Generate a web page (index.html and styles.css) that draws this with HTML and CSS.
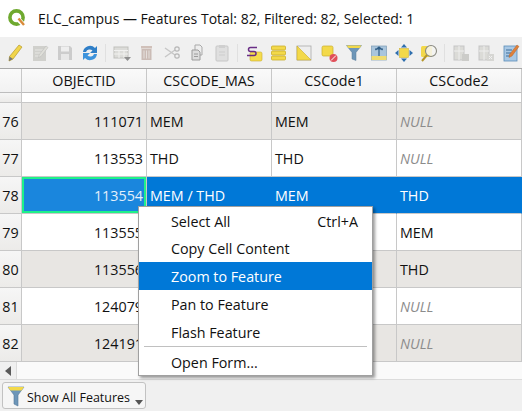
FILE: index.html
```html
<!DOCTYPE html>
<html lang="en">
<head>
  <meta charset="UTF-8" />
  <title>ELC_campus</title>
  <link rel="stylesheet" href="styles.css">
</head>
<body>
  <div class="titlebar">
    <svg class="logo" width="20" height="20" viewBox="0 0 20 20">
      <circle cx="9.5" cy="9.5" r="6.6" fill="none" stroke="#6fa92f" stroke-width="3.6"/>
      <path d="M9 9.5h4l5 5.5v3h-3.500l-5.500-5.500z" fill="#fff"/>
      <path d="M11.500 10.500l5.500 6.500" stroke="#d98a3a" stroke-width="2.400" fill="none"/>
    </svg>
    <span>ELC_campus — Features Total: 82, Filtered: 82, Selected: 1</span>
  </div>

  <div class="toolbar">
    <span class="tool"><svg width="20" height="20" viewBox="0 0 20 20"><path d="M14 2l3 2-9 12-4 2 .5-4.500z" fill="#f1d54b" stroke="#b59a2a" stroke-width=".7"/><path d="M4.500 13.500l3.500 2.500-4 2z" fill="#777"/></svg></span>
    <span class="tool off"><svg width="20" height="20" viewBox="0 0 20 20"><rect x="3" y="3" width="13" height="15" fill="#c9c9c4"/><path d="M5 7h8M5 10h7M5 13h5" stroke="#e6e6e2"/><path d="M16 3l2 1.500-7 9-2.500 1 .5-2.500z" fill="#dcdcd4" stroke="#aaa" stroke-width=".5"/></svg></span>
    <span class="tool off"><svg width="20" height="20" viewBox="0 0 20 20"><path d="M3 3h12l2 2v12H3z" fill="#c4c4c4"/><rect x="6" y="3.500" width="8" height="5" fill="#eee"/><rect x="6" y="11" width="8" height="6" fill="#e6e6e6"/></svg></span>
    <span class="tool"><svg width="20" height="20" viewBox="0 0 20 20"><path d="M3 9a7 7 0 0 1 12-4l2-2v7h-7l2.500-2.500A4 4 0 0 0 6 9z" fill="#2f7fc8"/><path d="M17 11a7 7 0 0 1-12 4l-2 2v-7h7l-2.500 2.500A4 4 0 0 0 14 11z" fill="#3d93dc"/></svg></span>
    <span class="sep"></span>
    <span class="tool off"><svg width="20" height="20" viewBox="0 0 20 20"><rect x="2" y="4" width="14" height="11" fill="#d8d8d4" stroke="#b5b5b0"/><path d="M2 7.500h14M2 11h14M7 7.500v7.500M12 7.500v7.500" stroke="#f2f2f0"/><path d="M12 14h7l-3.500 4z" fill="#777"/></svg></span>
    <span class="tool off"><svg width="20" height="20" viewBox="0 0 20 20"><rect x="4" y="3" width="11" height="2.500" fill="#c9b5ac"/><path d="M4.500 6h10v11h-10z" fill="#c2b0a8"/><path d="M7 7.500v8M9.500 7.500v8M12 7.500v8" stroke="#e3dcd8"/></svg></span>
    <span class="tool off"><svg width="20" height="20" viewBox="0 0 20 20"><path d="M3 5l10 7M3 14l10-7" stroke="#bdbdbd" stroke-width="1.400" fill="none"/><circle cx="15" cy="6" r="2.200" fill="none" stroke="#a9a9a9" stroke-width="1.200"/><circle cx="15" cy="13" r="2.200" fill="none" stroke="#a9a9a9" stroke-width="1.200"/></svg></span>
    <span class="tool off"><svg width="20" height="20" viewBox="0 0 20 20"><path d="M8 2h5l2 2v8H8z" fill="#eee" stroke="#999"/><path d="M5 7h6l2 2v8H5z" fill="#d9d9d9" stroke="#888"/><path d="M7 11h4M7 13.500h4" stroke="#888"/></svg></span>
    <span class="tool off"><svg width="20" height="20" viewBox="0 0 20 20"><rect x="4" y="3" width="12" height="15" rx="1" fill="#dcdcdc" stroke="#bdbdbd"/><rect x="7" y="2" width="6" height="3" fill="#c8c8c8"/><path d="M7 9h6M7 12h6" stroke="#c4c4c4"/></svg></span>
    <span class="sep"></span>
    <span class="tool"><svg width="20" height="20" viewBox="0 0 20 20"><rect x="6" y="9" width="12" height="9" rx="1.500" fill="#f5dc4d" stroke="#c9ad2b" stroke-width=".6"/><path d="M13 4.500H6.500a2 2 0 0 0 0 4H10a2 2 0 0 1 0 4H3" fill="none" stroke="#6a2e86" stroke-width="1.500"/></svg></span>
    <span class="tool"><svg width="20" height="20" viewBox="0 0 20 20"><g fill="#f3d94a" stroke="#c9ad2b" stroke-width=".8"><rect x="2.500" y="3" width="14" height="4" rx="1"/><rect x="2.500" y="8" width="14" height="4" rx="1"/><rect x="2.500" y="13" width="14" height="4" rx="1"/></g></svg></span>
    <span class="tool"><svg width="20" height="20" viewBox="0 0 20 20"><rect x="3" y="3" width="14" height="14" fill="#eee" stroke="#aaa" stroke-width=".8"/><path d="M3 3l14 14H3z" fill="#f3d94a" stroke="#c9ad2b" stroke-width=".6"/></svg></span>
    <span class="tool"><svg width="20" height="20" viewBox="0 0 20 20"><rect x="3" y="3" width="11" height="10" rx="1.500" fill="#f3d94a" stroke="#c9ad2b" stroke-width=".7"/><circle cx="14.500" cy="15" r="4" fill="#e0505a"/><path d="M12 17.500l5-5" stroke="#fff"/></svg></span>
    <span class="tool"><svg width="20" height="20" viewBox="0 0 20 20"><path d="M2.500 2.500h15l-5.500 7v8l-4-1.500v-6.500z" fill="#6d96b8" stroke="#5b7d99" stroke-width=".5"/><path d="M2.500 2.500h15l-2 2.500h-11z" fill="#f3d94a"/></svg></span>
    <span class="tool"><svg width="20" height="20" viewBox="0 0 20 20"><rect x="2.500" y="3" width="15" height="14" fill="#a9c5dc" stroke="#7d9cb6" stroke-width=".7"/><rect x="2.500" y="13" width="15" height="4" fill="#f0dc70"/><path d="M10 4v9M6.500 7l3.500-3 3.500 3M6 6h8" stroke="#2f5d86" stroke-width="1.200" fill="none"/></svg></span>
    <span class="tool"><svg width="20" height="20" viewBox="0 0 20 20"><rect x="5.500" y="5.500" width="9" height="9" fill="#f3d94a" stroke="#c9ad2b" stroke-width=".5"/><g fill="#2f6fae"><path d="M10 1l3 3.500H7z"/><path d="M10 19l3-3.500H7z"/><path d="M1 10l3.500-3v6z"/><path d="M19 10l-3.500-3v6z"/></g></svg></span>
    <span class="tool"><svg width="20" height="20" viewBox="0 0 20 20"><rect x="2" y="3" width="11" height="11" rx="1.500" fill="#f3d94a"/><circle cx="12" cy="8" r="5.500" fill="#f5f5f2" fill-opacity=".85" stroke="#8a8a80" stroke-width="1.100"/><path d="M8 12l-5 6" stroke="#b5962a" stroke-width="2"/></svg></span>
    <span class="sep"></span>
    <span class="tool off"><svg width="20" height="20" viewBox="0 0 20 20"><rect x="3" y="3" width="10" height="14" fill="#d6d6d2" stroke="#bbb"/><path d="M8 3v14M3 8h10" stroke="#efefed"/><rect x="11" y="11" width="7" height="7" fill="#c4c4c0"/></svg></span>
    <span class="tool off"><svg width="20" height="20" viewBox="0 0 20 20"><rect x="3" y="3" width="10" height="14" fill="#d6d6d2" stroke="#bbb"/><path d="M8 3v14M3 8h10" stroke="#efefed"/><rect x="11" y="11" width="7" height="7" fill="#d0d0cc"/><path d="M13 13l3 3M16 13l-3 3" stroke="#f2f2f2"/></svg></span>
    <span class="tool"><svg width="20" height="20" viewBox="0 0 20 20"><rect x="3" y="3" width="13" height="15" fill="#a9c8e4" stroke="#5b8db8" stroke-width=".8"/><path d="M5 7h6M5 10h5M5 13h4" stroke="#3d6f9c"/><path d="M16 2l2 1.500-7 9.500-3 1.500.5-3z" fill="#e0803a" stroke="#a85a22" stroke-width=".4"/></svg></span>
  </div>

  <div class="table-container">
    <table>
      <thead>
        <tr>
          <th class="corner"></th>
          <th>OBJECTID</th>
          <th>CSCODE_MAS</th>
          <th>CSCode1</th>
          <th>CSCode2</th>
        </tr>
      </thead>
      <tbody>
        <tr class="stub"><th></th><td></td><td></td><td></td><td></td></tr>
        <tr class="alt"><th>76</th><td class="num">111071</td><td>MEM</td><td>MEM</td><td class="null">NULL</td></tr>
        <tr><th>77</th><td class="num">113553</td><td>THD</td><td>THD</td><td class="null">NULL</td></tr>
        <tr class="selected"><th>78</th><td class="num current">113554</td><td>MEM / THD</td><td>MEM</td><td>THD</td></tr>
        <tr><th>79</th><td class="num">113555</td><td>MEM</td><td>MEM</td><td>MEM</td></tr>
        <tr class="alt"><th>80</th><td class="num">113556</td><td>THD</td><td>THD</td><td>THD</td></tr>
        <tr><th>81</th><td class="num">124079</td><td>MEM</td><td>MEM</td><td class="null">NULL</td></tr>
        <tr class="alt"><th>82</th><td class="num">124191</td><td>MEM</td><td>MEM</td><td class="null">NULL</td></tr>
      </tbody>
    </table>
  </div>

  <div class="scrollbar">
    <span class="scroll-left"></span>
  </div>

  <div class="bottom-bar">
    <button class="show-btn">
      <svg width="18" height="22" viewBox="0 0 18 22"><path d="M1 2h16l-6 8v11l-4-2v-9z" fill="#6d96b8" stroke="#55789a" stroke-width=".6"/><path d="M1 2h16l-2.500 3.500h-11z" fill="#f3d94a"/></svg>
      <span class="show-label">Show All Features</span>
      <i class="arrow"></i>
    </button>
  </div>

  <div class="menu">
    <div class="item"><span>Select All</span><span>Ctrl+A</span></div>
    <div class="item"><span>Copy Cell Content</span></div>
    <div class="item active"><span>Zoom to Feature</span></div>
    <div class="item"><span>Pan to Feature</span></div>
    <div class="item"><span>Flash Feature</span></div>
    <div class="divider"></div>
    <div class="item"><span>Open Form...</span></div>
  </div>
</body>
</html>
```

FILE: styles.css
```css
* {
  box-sizing: border-box;
}
body {
  margin: 0;
  width: 522px;
  height: 411px;
  overflow: hidden;
  position: relative;
  font-family: "Open Sans", Arial, sans-serif;
  font-size: 14.300px;
  color: #111;
  background: #f0f0f0;
}
.titlebar {
  height: 37px;
  background: white;
  display: flex;
  align-items: center;
  padding: 0 0 1px 7px;
  gap: 11px;
  font-size: 14px;
  color: #111;
}
.toolbar {
  height: 32px;
  display: flex;
  align-items: center;
  padding-left: 2px;
  background: #f0f0f0;
  border-bottom: 1px solid #a8a8a8;
}
.tool {
  width: 25px;
  display: flex;
  justify-content: center;
  flex: none;
}
.tool svg {
  display: block;
}
.tool.off {
  opacity: 0.8;
}
.sep {
  width: 7px;
  height: 18px;
  flex: none;
  background: linear-gradient(#e0e0e0, #e0e0e0) center / 1px 100% no-repeat;
}
.table-container {
  height: 293px;
  overflow: hidden;
  background: white;
}
table {
  width: 522px;
  table-layout: fixed;
  border-collapse: separate;
  border-spacing: 0;
}
th, td {
  padding: 0;
  font-weight: normal;
  border-right: 1px solid #c8c8c8;
  border-bottom: 1px solid #c8c8c8;
  white-space: nowrap;
  overflow: hidden;
}
thead th {
  width: 125px;
  height: 24px;
  text-align: center;
  background: linear-gradient(#fafafa, #f2f2f2);
  border-bottom-color: #bdbdbd;
}
thead th.corner {
  width: 22px;
}
tbody th {
  height: 37px;
  text-align: center;
  background: linear-gradient(#f6f6f6, #ecebe9);
}
tbody td {
  padding: 0 3px 0 3px;
}
.stub th, .stub td {
  height: 10px;
  font-size: 0;
}
.alt td {
  background: #e8e6e3;
}
.num {
  text-align: right;
}
.null {
  font-style: italic;
  color: #8c8c8c;
}
.selected td {
  background: #0078d7;
  color: white;
  border-right-color: #0078d7;
}
td.current {
  background: #1a86dd;
  color: #e4f0fb;
  box-shadow: inset 0 0 0 2px #1ff08a;
  border-right-color: #c8c8c8;
}
.scrollbar {
  height: 18px;
  background: #fafafa;
  border-bottom: 1px solid #dcdcdc;
  display: flex;
}
.scroll-left {
  width: 17px;
  background: #f0f0f0;
  border-right: 1px solid #dcdcdc;
  position: relative;
}
.scroll-left::after {
  content: "";
  position: absolute;
  left: 5px;
  top: 4px;
  border: 5px solid transparent;
  border-left: 0;
  border-right: 6px solid #5a5a5a;
}
.bottom-bar {
  height: 31px;
  padding: 2px 0 0 2px;
}
.show-btn {
  width: 144px;
  height: 27px;
  display: flex;
  align-items: center;
  gap: 2px;
  padding: 0 0 0 4px;
  background: #f6f6f6;
  border: 1px solid #c2c2c2;
  border-radius: 3px;
  font: inherit;
  font-size: 12.500px;
  color: #111;
  position: relative;
}
.show-label {
  padding-top: 3px;
}
.arrow {
  position: absolute;
  right: 2px;
  bottom: 3px;
  border: 4px solid transparent;
  border-bottom: 0;
  border-top: 5px solid #555;
}
.menu {
  position: absolute;
  left: 138px;
  top: 206px;
  width: 235px;
  height: 170px;
  background: white;
  border: 1px solid #a0a0a0;
  box-shadow: 2px 2px 3px rgba(0,0,0,0.4);
}
.item {
  height: 28px;
  padding: 1px 14px 0 32px;
  display: flex;
  align-items: center;
  justify-content: space-between;
}
.item:first-child {
  height: 27px;
}
.item:last-child {
  height: 26px;
  padding-top: 0;
}
.item.active {
  background: #0078d7;
  color: white;
}
.divider {
  height: 1px;
  margin: 0 5px 2px 5px;
  background: #c0c0c0;
}
```
